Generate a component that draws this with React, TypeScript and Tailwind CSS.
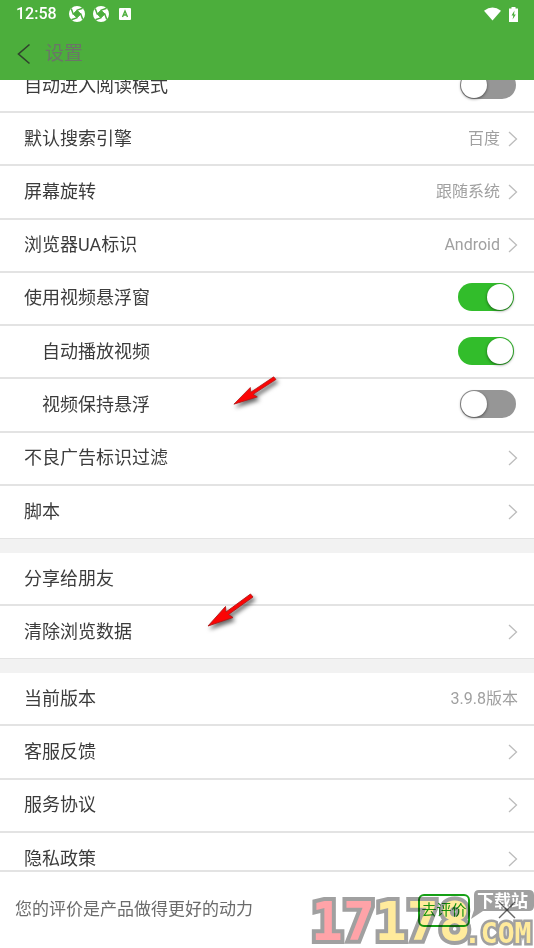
import { useState } from "react";

type Item = {
  label: string;
  value?: string;
  toggle?: boolean;
  arrow?: boolean;
  indent?: boolean;
};

const browserItems: Item[] = [
  { label: "自动进入阅读模式", toggle: false },
  { label: "默认搜索引擎", value: "百度", arrow: true },
  { label: "屏幕旋转", value: "跟随系统", arrow: true },
  { label: "浏览器UA标识", value: "Android", arrow: true },
  { label: "使用视频悬浮窗", toggle: true },
  { label: "自动播放视频", toggle: true, indent: true },
  { label: "视频保持悬浮", toggle: false, indent: true },
  { label: "不良广告标识过滤", arrow: true },
  { label: "脚本", arrow: true },
];

const dataItems: Item[] = [
  { label: "分享给朋友" },
  { label: "清除浏览数据", arrow: true },
];

const aboutItems: Item[] = [
  { label: "当前版本", value: "3.9.8版本" },
  { label: "客服反馈", arrow: true },
  { label: "服务协议", arrow: true },
  { label: "隐私政策", arrow: true },
];

function Chevron() {
  return (
    <svg width="10" height="16" viewBox="0 0 10 16" fill="none" stroke="#bcbcbc" strokeWidth="1.3">
      <path d="M1 1l7.5 7L1 15" />
    </svg>
  );
}

function Shutter() {
  return (
    <svg width="16" height="16" viewBox="0 0 16 16">
      <circle cx="8" cy="8" r="8" fill="#fff" />
      <path d="M8 4.2L11.8 8L8 11.8L4.2 8Z" fill="#4cae3c" stroke="#4cae3c" strokeLinejoin="round" />
      <path
        d="M4.4 8.4L2.2 2.4M7.6 4.4L13.6 2.2M11.6 7.6L13.8 13.6M8.4 11.6L2.4 13.8"
        stroke="#4cae3c"
        strokeWidth="1.5"
      />
    </svg>
  );
}

function Switch({ label, initial }: { label: string; initial: boolean }) {
  const [on, setOn] = useState(initial);

  return (
    <input
      type="checkbox"
      role="switch"
      aria-label={label}
      checked={on}
      onChange={(e) => setOn(e.target.checked)}
      className="mb-0.5 flex h-7 w-14 appearance-none items-center rounded-full bg-[#969696] px-px before:h-[26px] before:w-[26px] before:rounded-full before:bg-white before:shadow-[0_1px_3px_rgba(0,0,0,0.5)] checked:mr-0.5 checked:justify-end checked:bg-[#32bd2b]"
    />
  );
}

function Row({ item }: { item: Item }) {
  return (
    <li className="flex border-b-2 border-[#e3e3e3] text-lg text-[#3c3c3c] last:border-b">
      {item.toggle !== undefined ? (
        <div
          className={
            item.indent
              ? "flex w-full items-center justify-between pl-[42px] pr-[18px]"
              : "flex w-full items-center justify-between pl-6 pr-[18px]"
          }
        >
          <span>{item.label}</span>
          <Switch label={item.label} initial={item.toggle} />
        </div>
      ) : (
        <button className="flex w-full items-center pl-6 pr-4 text-left">
          <span>{item.label}</span>
          <span className="ml-auto flex items-center gap-2 text-base text-[#a0a0a0]">
            {item.value}
            {item.arrow && <Chevron />}
          </span>
        </button>
      )}
    </li>
  );
}

function Group({ items, className }: { items: Item[]; className: string }) {
  return (
    <ul className={`grid auto-rows-fr bg-white ${className}`}>
      {items.map((item) => (
        <Row key={item.label} item={item} />
      ))}
    </ul>
  );
}

// 红色指示箭头
function RedArrow({ className }: { className: string }) {
  return (
    <svg
      viewBox="0 0 46 34"
      preserveAspectRatio="none"
      className={`pointer-events-none absolute overflow-visible drop-shadow-[2px_3px_2px_rgba(0,0,0,0.6)] ${className}`}
    >
      <path
        d="M1 33L18.5 13.5L19 19L43.5 1L46 4L21.5 21.5L26 24.5Z"
        fill="#fb0505"
        stroke="#b01818"
        strokeWidth="0.9"
      />
    </svg>
  );
}

// 右下角水印
function Watermark() {
  return (
    <svg
      width="224"
      height="62"
      viewBox="0 0 224 62"
      className="pointer-events-none absolute bottom-0 right-0 mix-blend-multiply"
      fontFamily="'DejaVu Sans Mono', monospace"
      fontWeight="bold"
      stroke="#a0a0a0"
      strokeLinejoin="miter"
      paintOrder="stroke"
    >
      <text x="1" y="54" fontSize="53" strokeWidth="8" fill="#ffa3a8">
        17<tspan fill="#ffeb9c">178</tspan>
      </text>
      <path d="M169 4h50q5 0 5 5v11q0 5 -5 5h-46l-12 8 3 -9V9q0 -5 5 -5z" fill="#a0a0a0" stroke="none" />
      <text
        x="167"
        y="21"
        fontSize="17"
        fill="#fff"
        stroke="none"
        fontFamily="'Noto Sans CJK SC', sans-serif"
      >
        下载站
      </text>
      <text x="154" y="57" fontSize="28" strokeWidth="5" fill="#ffeb9c">
        .COM
      </text>
    </svg>
  );
}

export default function App() {
  const [showRate, setShowRate] = useState(true);

  return (
    <div className="relative flex h-screen flex-col overflow-hidden bg-[#f2f2f2] font-['Roboto','Noto_Sans_CJK_SC',sans-serif]">
      <header className="h-20 shrink-0 bg-[#4cae3c]">
        <div className="flex h-7 items-center px-4 text-white">
          <span className="text-base font-medium">12:58</span>
          <span className="ml-3 flex items-center gap-2">
            <Shutter />
            <Shutter />
            <svg width="12" height="12" viewBox="0 0 12 12" className="ml-0.5">
              <rect width="12" height="12" rx="1" fill="#fff" />
              <path d="M3.5 9L6 3l2.5 6M4.5 7h3" fill="none" stroke="#4cae3c" strokeWidth="1.4" />
            </svg>
          </span>
          <span className="ml-auto flex items-center gap-2">
            <svg width="17" height="14" viewBox="0 0 18 14">
              <path d="M0 3.5Q9 -3.5 18 3.5L9 14Z" fill="#fff" />
            </svg>
            <svg width="9" height="15" viewBox="0 0 9 15">
              <path d="M2.5 0h4v1.5H9V15H0V1.5h2.5z" fill="#fff" />
              <path d="M5.5 3.5L2.5 8.5h1.8L3.6 12.5L6.8 7.5H5z" fill="#4cae3c" />
            </svg>
          </span>
        </div>
        <div className="flex h-[52px] items-center gap-3.5 px-4">
          <button aria-label="返回">
            <svg width="15" height="22" viewBox="0 0 15 22" fill="none" stroke="#30422d" strokeWidth="1.6">
              <path d="M13.5 1.5L2.5 11l11 9.5" />
            </svg>
          </button>
          <h1 className="text-[19px] text-[#6b7568]">设置</h1>
        </div>
      </header>

      <main className="min-h-0 flex-1 overflow-y-auto [scrollbar-width:none]">
        <div className="-mt-5 flex flex-col gap-3.5">
          <Group items={browserItems} className="h-[479px]" />
          <Group items={dataItems} className="h-[106px]" />
          <Group items={aboutItems} className="h-[213px]" />
        </div>
      </main>

      {showRate && (
        <footer className="flex h-[78px] shrink-0 items-center border-t-2 border-[#e3e3e3] bg-white pl-[15px] pr-[18px]">
          <p className="text-[17px] text-[#6c6c6c]">您的评价是产品做得更好的动力</p>
          <button className="ml-auto h-[33px] w-[52px] rounded-md border-2 border-[#16a016] text-[15px] text-[#16a016]">
            去评价
          </button>
          <button aria-label="关闭" className="ml-7" onClick={() => setShowRate(false)}>
            <svg width="18" height="18" viewBox="0 0 18 18" stroke="#666" strokeWidth="1.4">
              <path d="M1 1l16 16M17 1L1 17" />
            </svg>
          </button>
        </footer>
      )}

      <RedArrow className="left-[233px] top-[376px] h-[29px] w-[43px]" />
      <RedArrow className="left-[207px] top-[593px] h-[34px] w-[46px]" />
      <Watermark />
    </div>
  );
}
